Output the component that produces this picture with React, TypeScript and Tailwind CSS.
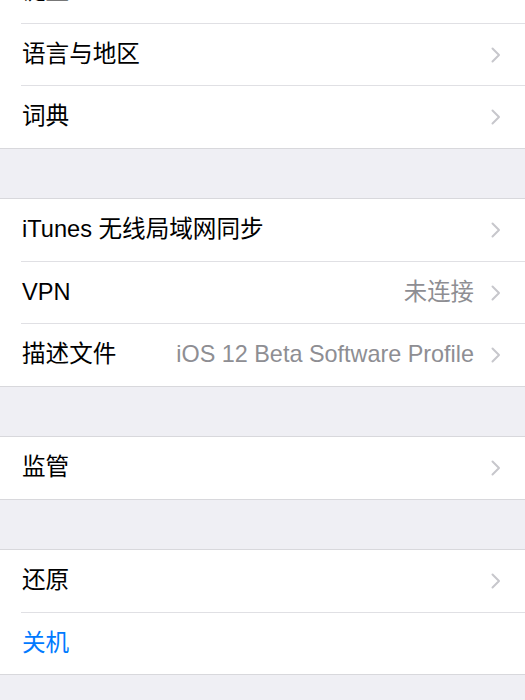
import React from "react";

const Chevron = () => (
  <svg width="10" height="16" viewBox="0 0 10 16" className="shrink-0">
    <polyline points="1.5,1.5 8,8 1.5,14.5" fill="none" stroke="#c7c7cc" strokeWidth="2" strokeLinecap="round" strokeLinejoin="round" />
  </svg>
);

type Item = { label: string; detail?: string; blue?: boolean; chevron?: boolean };

const Row = ({ item, last }: { item: Item; last: boolean }) => (
  <div className={`h-[62.6px] flex bg-white pl-[21px] ${last ? "border-b border-[#d8d8dc]" : ""}`}>
    <div className={`flex-1 flex items-center pl-[1px] pr-[24px] ${last ? "" : "border-b border-[#e0e0e4]"}`}>
      <span className={`text-[23.6px] leading-none ${item.blue ? "text-[#007aff]" : "text-black"} whitespace-nowrap`}>{item.label}</span>
      <div className="flex-1" />
      {item.detail && <span className="text-[23.4px] leading-none text-[#8e8e93] mr-[17px] whitespace-nowrap">{item.detail}</span>}
      {item.chevron !== false && <Chevron />}
    </div>
  </div>
);

const Section = ({ items, first }: { items: Item[]; first?: boolean }) => (
  <div className={`bg-white ${first ? "" : "border-t border-[#d8d8dc]"}`}>
    {items.map((it, i) => (
      <Row key={i} item={it} last={i === items.length - 1} />
    ))}
  </div>
);

export default function App() {
  return (
    <div
      className="w-[525px] h-[700px] overflow-hidden bg-[#efeff4]"
      style={{ fontFamily: '"Liberation Sans", "Noto Sans CJK SC", sans-serif' }}
    >
      <div className="mt-[-38.9px] flex flex-col">
        <Section first items={[{ label: "键盘" }, { label: "语言与地区" }, { label: "词典" }]} />
        <div className="h-[49.3px]" />
        <Section
          items={[
            { label: "iTunes 无线局域网同步" },
            { label: "VPN", detail: "未连接" },
            { label: "描述文件", detail: "iOS 12 Beta Software Profile" },
          ]}
        />
        <div className="h-[49.3px]" />
        <Section items={[{ label: "监管" }]} />
        <div className="h-[49.3px]" />
        <Section items={[{ label: "还原" }, { label: "关机", blue: true, chevron: false }]} />
      </div>
    </div>
  );
}
